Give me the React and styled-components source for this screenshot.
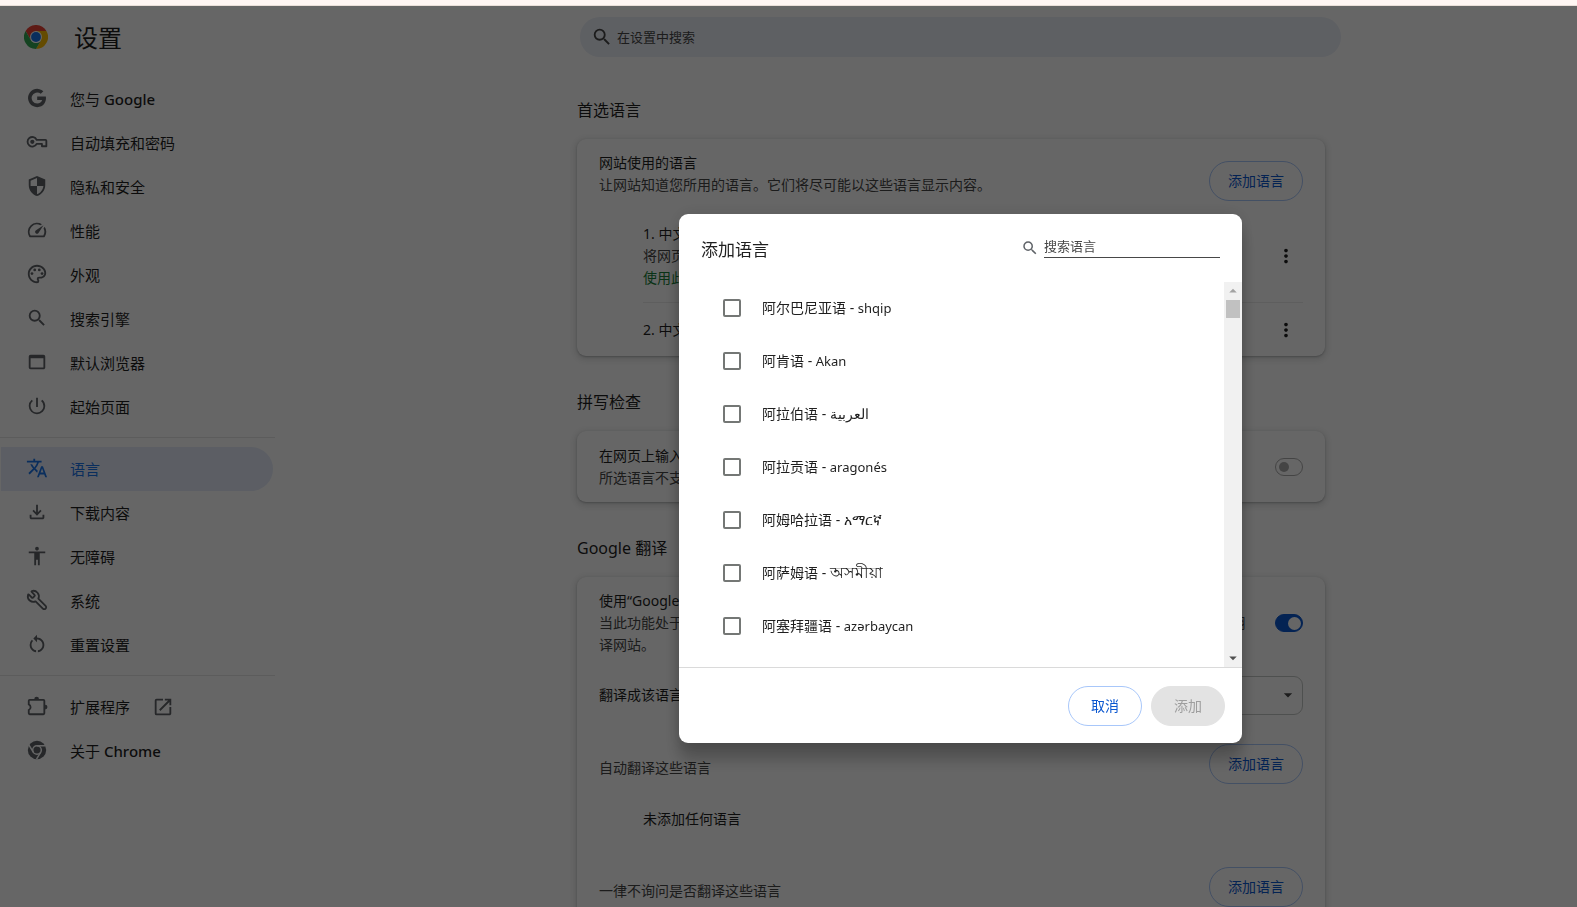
import React from "react";
import styled, { createGlobalStyle, css } from "styled-components";
import { Wrench } from "lucide-react";
import {
  MdSecurity,
  MdSpeed,
  MdOutlinePalette,
  MdSearch,
  MdWebAsset,
  MdPowerSettingsNew,
  MdTranslate,
  MdOutlineFileDownload,
  MdAccessibility,
  MdRestartAlt,
  MdOpenInNew,
  MdMoreVert,
  MdArrowDropDown,
  MdArrowDropUp,
} from "react-icons/md";

const GlobalStyle = createGlobalStyle`
  *, *::before, *::after { box-sizing: border-box; }
  html, body { margin: 0; height: 100%; overflow: hidden; background: #fff; }
  body, button, input, select {
    font-family: "Noto Sans", "Noto Sans CJK SC", sans-serif;
    font-size: 14px;
    line-height: 22px;
    color: #1f1f1f;
  }
  h1, h2, p, ul { margin: 0; padding: 0; font-weight: 400; }
`;

/* ---------- page frame ---------- */

const Page = styled.div`
  display: flex;
  flex-direction: column;
  min-height: 100vh;
`;

const TopStrip = styled.div`
  height: 6px;
  background: #fff6f3;
  border-bottom: 1px solid #eadfd9;
`;

const Header = styled.header`
  display: flex;
  align-items: flex-start;
  height: 62px;
`;

const Brand = styled.div`
  display: flex;
  align-items: center;
  gap: 26px;
  flex: 0 0 344px;
  height: 62px;
  padding-left: 24px;
`;

const PageTitle = styled.h1`
  font-size: 24px;
  line-height: 32px;
  padding-top: 2px;
`;

const SearchArea = styled.div`
  flex: 1;
  display: flex;
  justify-content: center;
  padding-top: 11px;
`;

const SearchBox = styled.label`
  display: flex;
  align-items: center;
  gap: 4px;
  width: 761px;
  height: 40px;
  padding: 0 11px;
  border-radius: 20px;
  background: #ebeff8;
  color: #474747;
  svg { width: 22px; height: 22px; flex: none; }
`;

const TextInput = styled.input`
  flex: 1;
  min-width: 0;
  border: 0;
  padding: 0;
  outline: none;
  background: transparent;
  font-size: 13px;
  &::placeholder { color: #474747; opacity: 1; }
`;

const Body = styled.div`
  display: flex;
  flex: 1;
`;

/* ---------- side menu ---------- */

const Sidebar = styled.nav`
  flex: 0 0 275px;
  padding-top: 9px;
`;

const MenuGroup = styled.div`
  & + & {
    margin-top: 8px;
    padding-top: 9px;
    border-top: 1px solid #e6e6e6;
  }
`;

const MenuItem = styled.a`
  display: flex;
  align-items: center;
  gap: 22px;
  height: 44px;
  margin: 0 2px 0 1px;
  padding-left: 25px;
  border-radius: 0 22px 22px 0;
  font-size: 15px;
  text-decoration: none;
  color: #1f1f1f;
  svg { width: 22px; height: 22px; flex: none; margin-bottom: 2px; color: #5f6368; }
  svg:last-child { margin: 0; }
  ${(p) =>
    p.$selected &&
    css`
      background: #e5ecfa;
      color: #1a73e8;
      svg { color: #1a73e8; }
    `}
`;

const ProductName = styled.span`
  font-weight: 500;
`;

/* ---------- content ---------- */

const Content = styled.main`
  flex: 1;
  display: flex;
  flex-direction: column;
  align-items: center;
  padding-left: 50px;
  padding-top: 32px;
`;

const Section = styled.section`
  width: 748px;
  max-width: 100%;
  margin-bottom: 36px;
`;

const SectionTitle = styled.h2`
  font-size: 16px;
  line-height: 20px;
  margin-bottom: 19px;
`;

const Card = styled.div`
  border-radius: 9px;
  background: #fff;
  box-shadow: 0 1px 2px rgba(60, 64, 67, 0.3), 0 2px 6px 2px rgba(60, 64, 67, 0.15);
`;

const Row = styled.div`
  display: flex;
  align-items: center;
  justify-content: space-between;
  min-height: 71px;
  padding: 13px 22px;
`;

const CompactRow = styled(Row)`
  min-height: 54px;
  padding-top: 0;
  padding-bottom: 2px;
`;

const IntroRow = styled(Row)`
  align-items: flex-start;
  padding-bottom: 0;
  button { margin-top: 9px; }
`;

const GroupRow = styled(Row)`
  align-items: flex-start;
  min-height: 69px;
  padding-top: 21px;
  padding-bottom: 8px;
  span { padding-top: 13px; }
`;

const RowText = styled.div`
  flex: 1;
  padding-right: 22px;
`;

const Secondary = styled.p`
  color: #474747;
`;

const Success = styled.p`
  color: #188038;
`;

const LanguageList = styled.ul`
  list-style: none;
  margin: 0 22px 0 66px;
`;

const LanguageItem = styled.li`
  display: flex;
  align-items: center;
  justify-content: space-between;
  min-height: 54px;
  padding: ${(p) => (p.$detailed ? "13px" : "0")} 0;
  & + & { border-top: 1px solid #ebebeb; }
`;

const EmptyItem = styled.p`
  padding: 16px 22px 16px 66px;
`;

const IconButton = styled.button`
  display: grid;
  place-items: center;
  width: 34px;
  height: 34px;
  border: 0;
  padding: 0;
  background: transparent;
  svg { width: 22px; height: 22px; }
`;

const Button = styled.button`
  height: 40px;
  padding: 0 ${(p) => (p.$wide ? "22px" : "18px")};
  border: 1px solid #a8c7fa;
  border-radius: 20px;
  background: transparent;
  color: #0b57d0;
  white-space: nowrap;
  &:disabled {
    border-color: #e3e3e3;
    background: #e3e3e3;
    color: #9e9e9e;
  }
`;

const Switch = styled.input`
  appearance: none;
  flex: none;
  display: flex;
  align-items: center;
  width: 28px;
  height: 18px;
  margin: 0;
  padding: 0 3px;
  border: 1px solid #ababab;
  border-radius: 9px;
  &::before {
    content: "";
    width: 10px;
    height: 10px;
    border-radius: 50%;
    background: #ababab;
  }
  &:checked {
    justify-content: flex-end;
    padding: 0 1px;
    border-color: #0b57d0;
    background: #0b57d0;
  }
  &:checked::before {
    width: 13px;
    height: 13px;
    background: #fff;
  }
`;

const SelectWrap = styled.div`
  display: grid;
  align-items: center;
  width: 220px;
  & > * { grid-area: 1 / 1; }
  svg { justify-self: end; width: 20px; height: 20px; margin-right: 5px; color: #474747; pointer-events: none; }
`;

const Select = styled.select`
  appearance: none;
  width: 100%;
  height: 39px;
  padding: 0 32px 0 12px;
  border: 1px solid #c4c7c5;
  border-radius: 9px;
  background: transparent;
`;

/* ---------- dialog ---------- */

const Backdrop = styled.div`
  position: fixed;
  inset: 6px 0 0 0;
  display: flex;
  justify-content: center;
  align-items: flex-start;
  padding: 208px 0 0 344px;
  background: rgba(0, 0, 0, 0.6);
`;

const Dialog = styled.div`
  width: 563px;
  border-radius: 9px;
  overflow: hidden;
  background: #fff;
  box-shadow: 0 0 16px rgba(0, 0, 0, 0.12), 0 16px 16px rgba(0, 0, 0, 0.24);
`;

const DialogHeader = styled.div`
  display: flex;
  align-items: center;
  justify-content: space-between;
  height: 68px;
  padding: 4px 22px 0;
`;

const DialogTitle = styled.h2`
  font-size: 17px;
  line-height: 24px;
`;

const DialogSearch = styled.label`
  display: flex;
  align-items: center;
  gap: 5px;
  padding-bottom: 8px;
  svg { width: 18px; height: 18px; margin-top: 4px; color: #5f6368; }
  input {
    flex: none;
    width: 176px;
    height: 24px;
    border-bottom: 1px solid #474747;
  }
`;

const DialogBody = styled.div`
  display: flex;
  height: 385px;
  overflow: hidden;
`;

const Options = styled.div`
  flex: 1;
  margin-top: -1px;
  padding-left: 44px;
`;

const Option = styled.label`
  display: flex;
  align-items: center;
  gap: 21px;
  height: 53px;
  white-space: pre;
`;

const NativeName = styled.span`
  font-size: 13px;
  &:lang(ar), &:lang(am) { font-size: 14px; }
  &:lang(as) { font-size: 16px; }
`;

const Checkbox = styled.input`
  appearance: none;
  width: 18px;
  height: 18px;
  margin: 0;
  border: 2px solid #747775;
  border-radius: 2px;
`;

const ScrollTrack = styled.div`
  display: flex;
  flex-direction: column;
  align-items: center;
  width: 18px;
  background: #f1f1f1;
  svg { width: 18px; height: 18px; flex: none; }
  svg:first-child { color: #a3a3a3; }
  svg:last-child { margin-top: auto; color: #505050; }
`;

const ScrollThumb = styled.div`
  width: 14px;
  height: 18px;
  background: #c1c1c1;
`;

const DialogFooter = styled.div`
  display: flex;
  align-items: center;
  justify-content: flex-end;
  gap: 9px;
  height: 76px;
  padding: 1px 17px 0;
  border-top: 1px solid #dadada;
`;

/* ---------- icons ---------- */

const ChromeLogo = () => (
  <svg width="24" height="24" viewBox="0 0 48 48" aria-hidden="true">
    <path fill="#ea4335" d="M3.2 12A24 24 0 0 1 44.8 12H24L13.6 30Z" />
    <path fill="#fbbc04" d="M44.8 12A24 24 0 0 1 24 48L34.4 30L24 12Z" />
    <path fill="#34a853" d="M3.2 12L13.6 30A12 12 0 0 0 34.4 30L24 48A24 24 0 0 1 3.2 12Z" />
    <circle cx="24" cy="24" r="12" fill="#fff" />
    <circle cx="24" cy="24" r="9.8" fill="#1a73e8" />
  </svg>
);

const GoogleIcon = () => (
  <svg viewBox="0 0 24 24" fill="currentColor" aria-hidden="true">
    <path d="M12.2 10.24v3.82h5.45c-.71 2.32-2.65 3.97-5.45 3.97a6.03 6.03 0 1 1 3.92-10.61l2.82-2.82A10 10 0 1 0 12.2 22c8.4 0 10.25-7.85 9.43-11.75z" />
  </svg>
);

const KeyIcon = () => (
  <svg viewBox="0 0 24 24" fill="none" stroke="currentColor" strokeWidth="2" aria-hidden="true">
    <path d="M11.6 9.6H21.2a1 1 0 0 1 1 1V16.6H17.4V14H11.6A5.2 5.2 0 1 1 11.6 9.6Z" strokeLinejoin="round" />
    <circle cx="6.9" cy="11.8" r="2.3" fill="currentColor" stroke="none" />
  </svg>
);

const FlippedWrench = styled(Wrench)`
  transform: scaleX(-1);
`;

const ExtensionIcon = () => (
  <svg viewBox="0 0 24 24" aria-hidden="true">
    <path
      d="M4 5.4h15a1 1 0 0 1 1 1v13.6a1 1 0 0 1-1 1H4a1 1 0 0 1-1-1v-3.6a3.4 3.4 0 0 0 0-6.2V6.4a1 1 0 0 1 1-1z"
      fill="none"
      stroke="currentColor"
      strokeWidth="2"
    />
    <path d="M9 4.6a2.6 2.6 0 0 1 5.2 0zM20.8 10.6a2.6 2.6 0 0 1 0 5.2z" fill="currentColor" />
  </svg>
);

const ChromeIcon = () => (
  <svg viewBox="0 0 24 24" aria-hidden="true">
    <circle cx="12" cy="12" r="10" fill="currentColor" />
    <g fill="none" stroke="#fff" strokeWidth="1.6">
      <circle cx="12" cy="12" r="4.7" />
      <path d="M12 7.3H21.4M7.9 14.3L3.3 6.6M16.1 14.3L11.5 22" />
    </g>
  </svg>
);

/* ---------- data ---------- */

const menu = [
  [
    { icon: GoogleIcon, label: "您与 ", product: "Google" },
    { icon: KeyIcon, label: "自动填充和密码" },
    { icon: MdSecurity, label: "隐私和安全" },
    { icon: MdSpeed, label: "性能" },
    { icon: MdOutlinePalette, label: "外观" },
    { icon: MdSearch, label: "搜索引擎" },
    { icon: MdWebAsset, label: "默认浏览器" },
    { icon: MdPowerSettingsNew, label: "起始页面" },
  ],
  [
    { icon: MdTranslate, label: "语言", selected: true },
    { icon: MdOutlineFileDownload, label: "下载内容" },
    { icon: MdAccessibility, label: "无障碍" },
    { icon: FlippedWrench, label: "系统" },
    { icon: MdRestartAlt, label: "重置设置" },
  ],
  [
    { icon: ExtensionIcon, label: "扩展程序", external: true },
    { icon: ChromeIcon, label: "关于 ", product: "Chrome" },
  ],
];

const languages = [
  ["阿尔巴尼亚语", "shqip", "sq"],
  ["阿肯语", "Akan", "ak"],
  ["阿拉伯语", "العربية", "ar"],
  ["阿拉贡语", "aragonés", "an"],
  ["阿姆哈拉语", "አማርኛ", "am"],
  ["阿萨姆语", "অসমীয়া", "as"],
  ["阿塞拜疆语", "azərbaycan", "az"],
];

function SideMenu() {
  return (
    <Sidebar>
      {menu.map((group, i) => (
        <MenuGroup key={i}>
          {group.map(({ icon: Icon, label, product, selected, external }) => (
            <MenuItem key={label} href="#" $selected={selected}>
              <Icon />
              <span>
                {label}
                {product && <ProductName>{product}</ProductName>}
              </span>
              {external && <MdOpenInNew />}
            </MenuItem>
          ))}
        </MenuGroup>
      ))}
    </Sidebar>
  );
}

function AddLanguageDialog() {
  return (
    <Backdrop>
      <Dialog role="dialog" aria-modal="true" aria-labelledby="dialog-title">
        <DialogHeader>
          <DialogTitle id="dialog-title">添加语言</DialogTitle>
          <DialogSearch>
            <MdSearch />
            <TextInput type="text" placeholder="搜索语言" aria-label="搜索语言" />
          </DialogSearch>
        </DialogHeader>
        <DialogBody>
          <Options>
            {languages.map(([name, native, code]) => (
              <Option key={code}>
                <Checkbox type="checkbox" />
                <span>
                  {name} - <NativeName lang={code}>{native}</NativeName>
                </span>
              </Option>
            ))}
          </Options>
          <ScrollTrack>
            <MdArrowDropUp />
            <ScrollThumb />
            <MdArrowDropDown />
          </ScrollTrack>
        </DialogBody>
        <DialogFooter>
          <Button $wide>取消</Button>
          <Button $wide disabled>添加</Button>
        </DialogFooter>
      </Dialog>
    </Backdrop>
  );
}

export default function App() {
  return (
    <>
      <GlobalStyle />
      <Page>
        <TopStrip />
        <Header>
          <Brand>
            <ChromeLogo />
            <PageTitle>设置</PageTitle>
          </Brand>
          <SearchArea>
            <SearchBox>
              <MdSearch />
              <TextInput type="text" placeholder="在设置中搜索" aria-label="在设置中搜索" />
            </SearchBox>
          </SearchArea>
        </Header>
        <Body>
          <SideMenu />
          <Content>
            <Section>
              <SectionTitle>首选语言</SectionTitle>
              <Card>
                <IntroRow>
                  <RowText>
                    <p>网站使用的语言</p>
                    <Secondary>让网站知道您所用的语言。它们将尽可能以这些语言显示内容。</Secondary>
                  </RowText>
                  <Button>添加语言</Button>
                </IntroRow>
                <LanguageList>
                  <LanguageItem $detailed>
                    <div>
                      <p>1. 中文（简体）</p>
                      <Secondary>将网页翻译成该语言</Secondary>
                      <Success>使用此语言显示 Google Chrome</Success>
                    </div>
                    <IconButton aria-label="更多操作"><MdMoreVert /></IconButton>
                  </LanguageItem>
                  <LanguageItem>
                    <p>2. 中文</p>
                    <IconButton aria-label="更多操作"><MdMoreVert /></IconButton>
                  </LanguageItem>
                </LanguageList>
              </Card>
            </Section>

            <Section>
              <SectionTitle>拼写检查</SectionTitle>
              <Card>
                <Row>
                  <RowText>
                    <label htmlFor="spellcheck">在网页上输入文字时检查拼写错误</label>
                    <Secondary>所选语言不支持拼写检查</Secondary>
                  </RowText>
                  <Switch id="spellcheck" type="checkbox" role="switch" />
                </Row>
              </Card>
            </Section>

            <Section>
              <SectionTitle>Google 翻译</SectionTitle>
              <Card>
                <Row>
                  <RowText>
                    <label htmlFor="translate">使用“Google 翻译”</label>
                    <Secondary>
                      当此功能处于开启状态时， Google 翻译 会询问您是否要将网站翻译成您的首选语言。它还会为您自动翻译网站。
                    </Secondary>
                  </RowText>
                  <Switch id="translate" type="checkbox" role="switch" defaultChecked />
                </Row>
                <CompactRow>
                  <label htmlFor="target">翻译成该语言</label>
                  <SelectWrap>
                    <Select id="target" defaultValue="zh">
                      <option value="zh">中文</option>
                    </Select>
                    <MdArrowDropDown />
                  </SelectWrap>
                </CompactRow>
                <GroupRow>
                  <Secondary as="span">自动翻译这些语言</Secondary>
                  <Button>添加语言</Button>
                </GroupRow>
                <EmptyItem>未添加任何语言</EmptyItem>
                <GroupRow>
                  <Secondary as="span">一律不询问是否翻译这些语言</Secondary>
                  <Button>添加语言</Button>
                </GroupRow>
                <EmptyItem>未添加任何语言</EmptyItem>
              </Card>
            </Section>
          </Content>
        </Body>
      </Page>
      <AddLanguageDialog />
    </>
  );
}
